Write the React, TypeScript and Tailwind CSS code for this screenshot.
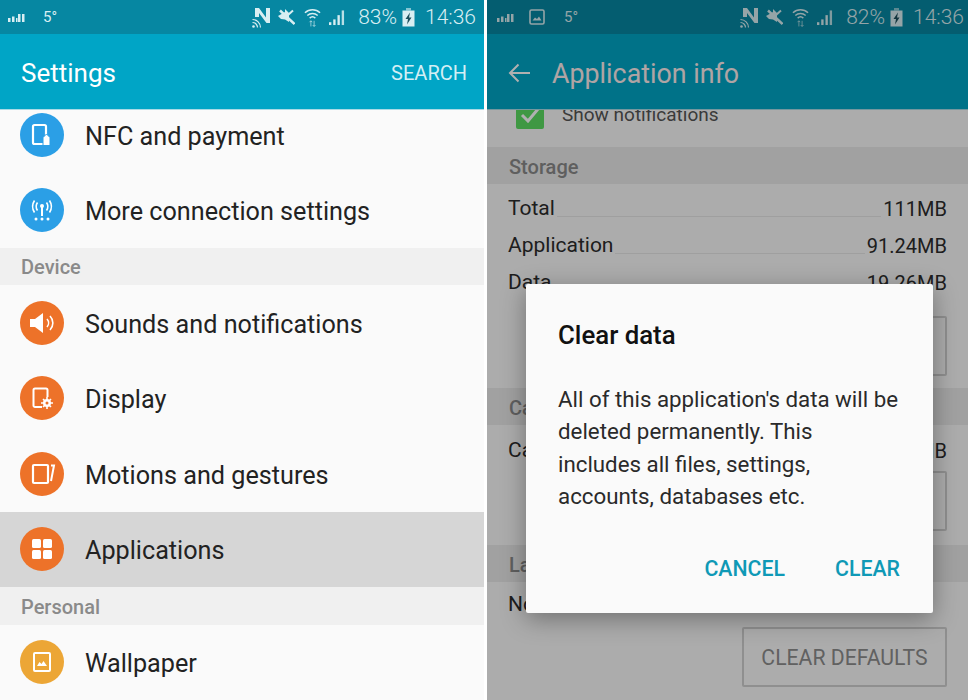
import type { ReactNode } from 'react'

const blue = 'bg-[#2b9fe6]'
const orange = 'bg-[#ed7229]'
const amber = 'bg-[#eca636]'

function SignalSmall() {
  return (
    <svg width="18" height="9" viewBox="0 0 18 9" fill="currentColor">
      <rect x="0" y="5" width="2.5" height="4" />
      <rect x="4" y="3.5" width="2.5" height="5.5" />
      <rect x="8" y="5" width="1.5" height="4" />
      <rect x="10" y="1" width="2.5" height="8" />
      <rect x="14" y="1" width="2.5" height="8" />
    </svg>
  )
}

function ImageStatus() {
  return (
    <svg width="16" height="16" viewBox="0 0 16 16" fill="none" stroke="currentColor" strokeWidth="1.6">
      <rect x="1" y="1" width="14" height="14" rx="1.5" />
      <path d="M3.5 11.5 L6 8.5 L8 10 L10 7.5 L12.5 11.5 Z" fill="currentColor" stroke="none" />
    </svg>
  )
}

function NfcGlyph() {
  return (
    <svg width="18" height="21" viewBox="0 0 18 21" fill="currentColor">
      <path d="M3 1H7L14 10.500V1H18V16H14.500L7 6V10H3Z" />
      <path d="M0.500 12.500a8 8 0 0 1 8 8" fill="none" stroke="currentColor" strokeWidth="1.2" />
      <path d="M0.500 15.500a5 5 0 0 1 5 5" fill="none" stroke="currentColor" strokeWidth="1.2" />
      <circle cx="1.500" cy="19.500" r="1.300" />
    </svg>
  )
}

function MuteGlyph() {
  return (
    <svg width="17" height="18" viewBox="0 0 17 18" fill="currentColor">
      <path d="M0 8L7 4V1L11 5V14L7 11.500L3 11Z" />
      <path d="M2 2.500L16.500 16" stroke="currentColor" strokeWidth="2.400" />
      <path d="M10 7L15 2.500" stroke="currentColor" strokeWidth="2" />
    </svg>
  )
}

function WifiGlyph() {
  return (
    <svg width="17" height="20" viewBox="0 0 18 20" fill="none" stroke="currentColor" strokeWidth="1.500">
      <path d="M1 5.500a11.500 11.500 0 0 1 16 0" />
      <path d="M3.500 8.500a8 8 0 0 1 11 0" />
      <path d="M6 11.200a4.400 4.400 0 0 1 6 0" />
      <path d="M7.300 20V14M5.800 15.500L7.300 14L8.800 15.500M10.700 14V20M9.200 18.500L10.700 20L12.200 18.500" strokeWidth="1" opacity="0.7" />
    </svg>
  )
}

function SignalGlyph() {
  return (
    <svg width="16" height="17" viewBox="0 0 17 17" fill="currentColor">
      <rect x="0" y="13.500" width="2.500" height="3" />
      <rect x="4.500" y="10.500" width="2.500" height="6" />
      <rect x="9" y="6" width="2.500" height="10.500" />
      <rect x="13.500" y="1" width="2.500" height="15.500" opacity="0.85" />
    </svg>
  )
}

function BatteryGlyph() {
  return (
    <svg width="13" height="19" viewBox="0 0 13 19">
      <rect x="4" y="0" width="5" height="2.500" fill="currentColor" opacity="0.6" />
      <rect x="0.500" y="2.500" width="12" height="16" fill="currentColor" />
      <path d="M8 4.500L3.500 11H6L5 16.500L9.500 9.500H7Z" fill="#1d4f5c" />
    </svg>
  )
}

function StatusBar({ battery, withImage }: { battery: string; withImage?: boolean }) {
  return (
    <div
      className={`flex h-[34px] shrink-0 items-center justify-between bg-[#0687a2] text-[#d8eef2] ${
        withImage ? 'pl-[10px] pr-[4px]' : 'pl-[8px] pr-[8px]'
      }`}
    >
      <div className="flex items-center">
        <SignalSmall />
        {withImage && (
          <span className="ml-[14px]">
            <ImageStatus />
          </span>
        )}
        <span className={`${withImage ? 'ml-[19px]' : 'ml-[17px]'} text-[15px] leading-none`}>5°</span>
      </div>
      <div className="flex items-center">
        <NfcGlyph />
        <span className="ml-[8px]">
          <MuteGlyph />
        </span>
        <span className="ml-[9px]">
          <WifiGlyph />
        </span>
        <span className="ml-[8px]">
          <SignalGlyph />
        </span>
        <span className="ml-[13px] text-[21px] leading-none font-light">{battery}</span>
        <span className="ml-[5px]">
          <BatteryGlyph />
        </span>
        <span className="ml-[10px] text-[21px] leading-none font-light">14:36</span>
      </div>
    </div>
  )
}

function Round({ color, children }: { color: string; children: ReactNode }) {
  return (
    <div className={`flex h-[44px] w-[44px] shrink-0 items-center justify-center rounded-full ${color}`}>
      <svg width="44" height="44" viewBox="0 0 44 44" fill="none" stroke="white" strokeWidth="2">
        {children}
      </svg>
    </div>
  )
}

function SettingRow({ icon, label, selected, first }: { icon: ReactNode; label: string; selected?: boolean; first?: boolean }) {
  return (
    <div
      className={`flex shrink-0 items-center gap-[21px] pl-[20px] text-[25.200px] text-[#222222] ${first ? 'h-[75px]' : 'h-[75.500px]'} ${selected ? 'bg-[#d6d6d6]' : ''}`}
    >
      {icon}
      <span className="pt-[4px]">{label}</span>
    </div>
  )
}

function SectionHead({ label }: { label: string }) {
  return (
    <div className="flex h-[37.500px] shrink-0 items-center bg-[#f0f0f0] pl-[21px] pt-[2px] text-[20px] font-medium text-[#8a8a8a]">{label}</div>
  )
}

function SettingsPanel() {
  return (
    <div className="flex h-[700px] w-[484px] flex-col overflow-hidden bg-[#fafafa]" style={{ fontFamily: 'Roboto, sans-serif' }}>
      <StatusBar battery="83%" />
      <div className="z-10 flex h-[76px] shrink-0 items-center justify-between border-b border-[#a9dbe6] bg-[#00a5c6] pl-[21px] pr-[17px] pt-[2px] text-white">
        <span className="pt-[2px] text-[26px]">Settings</span>
        <span className="text-[20px] text-[#d3eff5]">SEARCH</span>
      </div>
      <div className="-mt-[13px]">
        <SettingRow
          first
          label="NFC and payment"
          icon={
            <Round color={blue}>
              <rect x="13" y="12" width="13" height="19" rx="1.500" strokeWidth="2.200" />
              <path d="M23 24.500l3.500-3.500 3.500 3.500v8h-7z" fill="white" stroke="#2b9fe6" strokeWidth="1" />
            </Round>
          }
        />
        <SettingRow
          label="More connection settings"
          icon={
            <Round color={blue}>
              <path d="M22 19V28" />
              <circle cx="22" cy="18" r="2" fill="white" stroke="none" />
              <path d="M17.500 14.500a7 7 0 0 0 0 8M26.500 14.500a7 7 0 0 1 0 8M14.500 12.500a11 11 0 0 0 0 12M29.500 12.500a11 11 0 0 1 0 12" strokeWidth="1.600" />
              <circle cx="16" cy="31" r="1.500" fill="white" stroke="none" />
              <circle cx="22" cy="31" r="1.500" fill="white" stroke="none" />
              <circle cx="28" cy="31" r="1.500" fill="white" stroke="none" />
            </Round>
          }
        />
        <SectionHead label="Device" />
        <SettingRow
          label="Sounds and notifications"
          icon={
            <Round color={orange}>
              <path d="M10 18H15L23 12V32L15 26H10Z" fill="white" stroke="none" />
              <path d="M27 18a6 6 0 0 1 0 8M30 15a10 10 0 0 1 0 14" strokeWidth="1.600" />
            </Round>
          }
        />
        <SettingRow
          label="Display"
          icon={
            <Round color={orange}>
              <path d="M22 31H15a1.500 1.500 0 0 1-1.500-1.500V14a1.500 1.500 0 0 1 1.500-1.500H26a1.500 1.500 0 0 1 1.500 1.500V21" />
              <circle cx="27" cy="27" r="4" fill="white" stroke="none" />
              <path d="M27 21V33M21 27H33M23 23L31 31M31 23L23 31" strokeWidth="1.600" />
              <circle cx="27" cy="27" r="1.500" fill="#ed7229" stroke="none" />
            </Round>
          }
        />
        <SettingRow
          label="Motions and gestures"
          icon={
            <Round color={orange}>
              <rect x="13" y="13" width="15" height="18" rx="1" strokeWidth="2.200" />
              <path d="M31 13.500H34L31 29" />
            </Round>
          }
        />
        <SettingRow
          selected
          label="Applications"
          icon={
            <Round color={orange}>
              <g fill="white" stroke="none">
                <rect x="12" y="12" width="9" height="9" rx="1.500" />
                <rect x="23" y="12" width="9" height="9" rx="1.500" />
                <rect x="12" y="23" width="9" height="9" rx="1.500" />
                <rect x="23" y="23" width="9" height="9" rx="1.500" />
              </g>
            </Round>
          }
        />
        <SectionHead label="Personal" />
        <SettingRow
          label="Wallpaper"
          icon={
            <Round color={amber}>
              <rect x="14" y="13" width="16" height="18" rx="1" />
              <path d="M17 26L19.500 22L21.500 24L23.500 21L27 26Z" fill="white" stroke="none" />
            </Round>
          }
        />
      </div>
    </div>
  )
}

function InfoRow({ label, value }: { label: string; value?: string }) {
  return (
    <div className="flex h-[37px] items-center text-[21px] text-[#2c2c2c]">
      <span>{label}</span>
      {value && (
        <>
          <span className="mx-[2px] mt-[16px] h-px flex-1 bg-[#e6e6e6]" />
          <span className="text-[20px]">{value}</span>
        </>
      )}
    </div>
  )
}

function OutlineBtn({ label }: { label?: string }) {
  return (
    <div className="flex justify-end pr-[21px]">
      <div className="flex h-[60px] w-[205px] items-center justify-center rounded-[2px] border-2 border-[#cfcfcf] pt-[1px] text-[21.200px] text-[#8d8d8d]">
        {label}
      </div>
    </div>
  )
}

function InfoHead({ label }: { label: string }) {
  return <div className="flex h-[37px] items-center bg-[#e9e9e9] pl-[22px] pt-[2px] text-[20px] font-medium text-[#8a8a8a]">{label}</div>
}

function AppInfoPanel() {
  return (
    <div className="relative h-[700px] flex-1 overflow-hidden bg-[#fafafa]" style={{ fontFamily: 'Roboto, sans-serif' }}>
      <div className="flex h-full flex-col">
        <StatusBar battery="82%" withImage />
        <div className="z-10 flex h-[76px] shrink-0 items-center border-b border-[#a9dbe6] bg-[#00a5c6] pl-[21px] pt-[2px] text-white">
          <svg width="22" height="20" viewBox="0 0 22 20" fill="none" stroke="currentColor" strokeWidth="2">
            <path d="M22 10H2M10.500 1.500L2 10L10.500 18.500" />
          </svg>
          <span className="ml-[22px] pt-[3px] text-[26.800px] text-[#ffeeee]">Application info</span>
        </div>
        <div className="-mt-[12px] flex h-[49px] shrink-0 items-start pl-[29px] pt-[3px] text-[19px] text-[#555555]">
          <div className="flex h-[28px] w-[28px] items-center justify-center rounded-[2px] bg-[#5cdc62]">
            <svg width="20" height="16" viewBox="0 0 20 16" fill="none" stroke="white" strokeWidth="3">
              <path d="M2 8L8 14L18 2" />
            </svg>
          </div>
          <span className="ml-[18px] leading-[28px]">Show notifications</span>
        </div>
        <InfoHead label="Storage" />
        <div className="px-[21px] pt-[6px]">
          <InfoRow label="Total" value="111MB" />
          <InfoRow label="Application" value="91.24MB" />
          <InfoRow label="Data" value="19.26MB" />
        </div>
        <div className="mt-[15px]">
          <OutlineBtn />
        </div>
        <div className="mt-[12px]">
          <InfoHead label="Cache" />
        </div>
        <div className="px-[21px] pt-[7px]">
          <InfoRow label="Cache" value="0.00MB" />
        </div>
        <div className="mt-[2px]">
          <OutlineBtn />
        </div>
        <div className="mt-[14px]">
          <InfoHead label="Launch by default" />
        </div>
        <div className="px-[21px] pt-[4px]">
          <InfoRow label="No defaults set." />
        </div>
        <div className="mt-[4px]">
          <OutlineBtn label="CLEAR DEFAULTS" />
        </div>
      </div>
      {/* scrim + dialog */}
      <div className="absolute inset-0 z-20 bg-black/[0.31]" />
      <div className="absolute left-[39px] top-[284px] z-30 h-[329px] w-[407px] rounded-[2px] bg-[#fafafa] pl-[32px] pt-[36px] shadow-[0_6px_24px_rgba(0,0,0,0.35)]">
        <div className="text-[25.800px] leading-[30px] font-medium text-[#111111]">Clear data</div>
        <div className="mt-[33px] text-[22.300px] leading-[32.400px] text-[#2a2a2a]">
          All of this application's data will be
          <br />
          deleted permanently. This
          <br />
          includes all files, settings,
          <br />
          accounts, databases etc.
        </div>
        <div className="mt-[43px] flex justify-end gap-[50px] pr-[33px] text-[21.300px] leading-[26px] font-medium text-[#0f99b6]">
          <span>CANCEL</span>
          <span>CLEAR</span>
        </div>
      </div>
    </div>
  )
}

export default function App() {
  return (
    <div className="flex h-[700px] w-[968px] gap-[3px] overflow-hidden bg-white">
      <SettingsPanel />
      <AppInfoPanel />
    </div>
  )
}
